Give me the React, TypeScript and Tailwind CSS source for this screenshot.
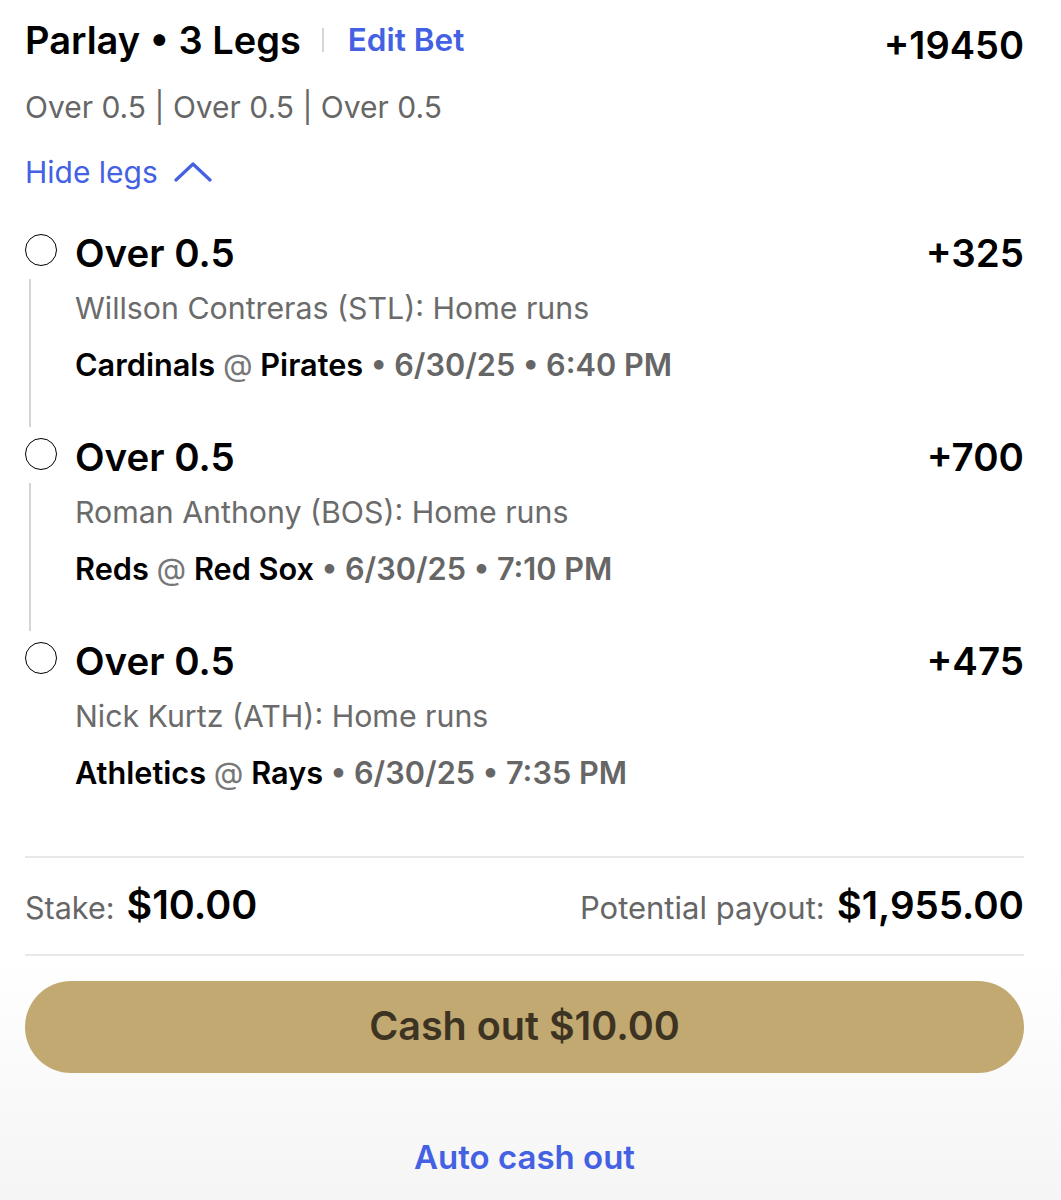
import React from 'react';

interface Leg {
  line: string;
  odds: string;
  player: string;
  away: string;
  home: string;
  when: string;
}

const legs: Leg[] = [
  { line: 'Over 0.5', odds: '+325', player: 'Willson Contreras (STL): Home runs', away: 'Cardinals', home: 'Pirates', when: '6/30/25 • 6:40 PM' },
  { line: 'Over 0.5', odds: '+700', player: 'Roman Anthony (BOS): Home runs', away: 'Reds', home: 'Red Sox', when: '6/30/25 • 7:10 PM' },
  { line: 'Over 0.5', odds: '+475', player: 'Nick Kurtz (ATH): Home runs', away: 'Athletics', home: 'Rays', when: '6/30/25 • 7:35 PM' },
];

const LegRow: React.FC<{ leg: Leg; last: boolean }> = ({ leg, last }) => (
  <div className={`flex ${last ? 'pb-[65px]' : 'pb-[53px]'}`}>
    {/* timeline column */}
    <div className="w-[50px] flex flex-col shrink-0">
      <div className="w-[32px] h-[32px] rounded-full border-[1.5px] border-black mt-[2px]" />
      {!last && <div className="w-[2px] flex-1 bg-[#d4d4d4] ml-[4px] mt-[13px] -mb-[44px]" />}
    </div>
    <div className="flex-1">
      <div className="flex justify-between items-center h-[44px]">
        <span className="text-[38.5px] font-semibold text-black">{leg.line}</span>
        <span className="text-[38.5px] font-semibold text-black">{leg.odds}</span>
      </div>
      <div className="mt-[14px] h-[36px] leading-[36px] text-[30.3px] text-[#6b6b6b]">{leg.player}</div>
      <div className="mt-[21px] h-[36px] leading-[36px] text-[30.7px] font-semibold text-black">
        {leg.away} <span className="font-normal text-[#777]">@</span> {leg.home}
        <span className="text-[#666]"> • {leg.when}</span>
      </div>
    </div>
  </div>
);

export default function App() {
  return (
    <div className="min-h-[1200px] bg-white font-['Inter',sans-serif] flex flex-col">
      <div className="pl-[25px] pr-[37px] pt-[16px]">
        {/* header */}
        <div className="flex justify-between items-center h-[48px]">
          <div className="flex items-center">
            <span className="text-[38px] font-semibold text-black">Parlay • 3 Legs</span>
            <span className="w-[2px] h-[24px] bg-[#d6d6d6] ml-[21px] mr-[24px]" />
            <span className="text-[31.5px] font-semibold text-[#4461e3]">Edit Bet</span>
          </div>
          <span className="text-[38px] font-semibold text-black mt-[10px]">+19450</span>
        </div>
        <div className="mt-[23px] text-[30px] text-[#666] h-[40px] leading-[40px]">Over 0.5 | Over 0.5 | Over 0.5</div>
        <div className="mt-[25px] flex items-center h-[40px] text-[#4461e3]">
          <span className="text-[30px]">Hide legs</span>
          <svg width="38" height="22" viewBox="0 0 38 22" className="ml-[16px]" fill="none">
            <polyline points="2,19 19,3 36,19" stroke="#4461e3" strokeWidth="3.2" strokeLinecap="round" strokeLinejoin="round" />
          </svg>
        </div>

        {/* legs */}
        <div className="mt-[40px]">
          {legs.map((leg, i) => (
            <LegRow key={i} leg={leg} last={i === legs.length - 1} />
          ))}
        </div>

        {/* stake / payout */}
        <div className="border-t-2 border-[#e8e8e8] border-b-2 flex justify-between items-center h-[100px]">
          <div className="flex items-baseline gap-[12px]">
            <span className="text-[30.5px] text-[#666]">Stake:</span>
            <span className="text-[39.5px] font-semibold text-black">$10.00</span>
          </div>
          <div className="flex items-baseline gap-[12px]">
            <span className="text-[31px] text-[#666]">Potential payout:</span>
            <span className="text-[38.5px] font-semibold text-black">$1,955.00</span>
          </div>
        </div>
      </div>

      <div className="flex-1 pl-[25px] pr-[37px] pt-[25px] bg-gradient-to-b from-white to-[#f5f5f5]">
        <button className="w-full h-[92px] rounded-full bg-[#c1a971] text-[39.5px] font-semibold text-[#3d3322]">
          Cash out $10.00
        </button>
        <div className="mt-[60px] text-center text-[33px] font-semibold text-[#4461e3]">Auto cash out</div>
      </div>
    </div>
  );
}
